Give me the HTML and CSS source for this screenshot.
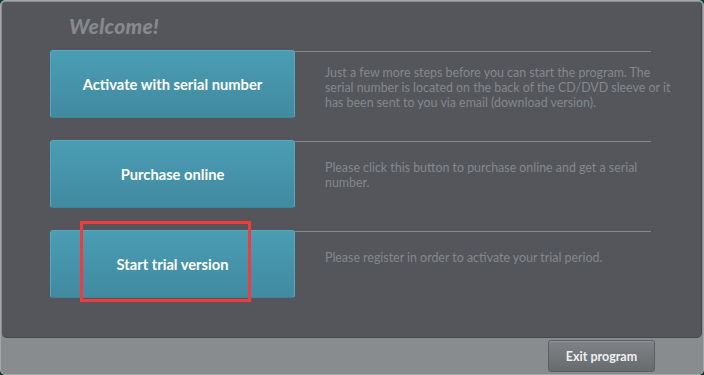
FILE: index.html
```html
<!DOCTYPE html>
<html lang="en">
<head>
    <meta charset="UTF-8">
    <title>Welcome</title>
    <link rel="stylesheet" href="styles.css">
</head>
<body>

    <div class="window">
        <div class="panel">
            <h1 class="welcome">Welcome!</h1>

            <div class="row">
                <button class="action">Activate with serial number</button>
                <div class="desc desc-long">
                    <p>Just a few more steps before you can start the program. The serial number is located on the back of the CD/DVD sleeve or it has been sent to you via email (download version).</p>
                </div>
            </div>

            <div class="row">
                <button class="action">Purchase online</button>
                <div class="desc">
                    <p>Please click this button to purchase online and get a serial number.</p>
                </div>
            </div>

            <div class="row">
                <button class="action">Start trial version</button>
                <div class="desc">
                    <p>Please register in order to activate your trial period.</p>
                </div>
                <div class="highlight"></div>
            </div>
        </div>

        <div class="footer">
            <button class="exit">Exit program</button>
        </div>
    </div>

</body>
</html>
```

FILE: styles.css
```css
body {
    margin: 0;
    height: 375px;
    background: #0c3a31;
    font-family: 'Lato', 'Open Sans', sans-serif;
}

.window {
    height: 373px;
    border: 1px solid #a4a8ab;
    border-radius: 5px;
    background: #888c8f;
    display: flex;
    flex-direction: column;
    overflow: hidden;
}

.panel {
    margin: 1px 1px 0 1px;
    height: 336px;
    background: #54565b;
    border-bottom: 1px solid #45474b;
    border-right: 1px solid #46484c;
    border-radius: 4px 4px 5px 5px;
    padding-left: 48px;
    box-sizing: border-box;
}

.welcome {
    margin: 0;
    padding: 11px 0 0 19px;
    height: 48px;
    box-sizing: border-box;
    font-size: 21px;
    font-style: italic;
    font-weight: 900;
    color: #87898d;
    letter-spacing: 0.3px;
}

.row {
    display: flex;
    height: 68px;
    margin-bottom: 22px;
    position: relative;
}

.action {
    width: 245px;
    height: 68px;
    flex: none;
    border: 1px solid #55a9bf;
    border-bottom-color: #3f8497;
    border-radius: 3px;
    background: linear-gradient(to bottom, #4a9db4, #418aa0);
    color: #fff;
    font-family: 'Lato', sans-serif;
    font-size: 14.7px;
    font-weight: bold;
    padding: 0;
}

.desc {
    width: 356px;
    margin-top: 1px;
    border-top: 1px solid #84878b;
    padding: 18px 0 0 30px;
    box-sizing: border-box;
    font-size: 12.4px;
    line-height: 15px;
    color: #85888c;
}

.desc-long {
    padding-top: 13px;
}

.desc p {
    margin: 0;
    width: 348px;
}

.highlight {
    position: absolute;
    left: 30px;
    top: -9px;
    width: 165px;
    height: 75px;
    border: 3px solid #f23b3b;
}

.footer {
    flex: 1;
    display: flex;
    justify-content: flex-end;
    align-items: flex-start;
    padding: 2px 48px 0 0;
}

.exit {
    width: 107px;
    height: 32px;
    border: 1px solid #5c5e61;
    border-radius: 3px;
    background: linear-gradient(to bottom, #808386, #686b6e);
    box-shadow: inset 0 1px 0 #93969a;
    color: #eef0f1;
    font-family: 'Lato', sans-serif;
    font-size: 12.5px;
    font-weight: bold;
    padding: 0;
}
```
